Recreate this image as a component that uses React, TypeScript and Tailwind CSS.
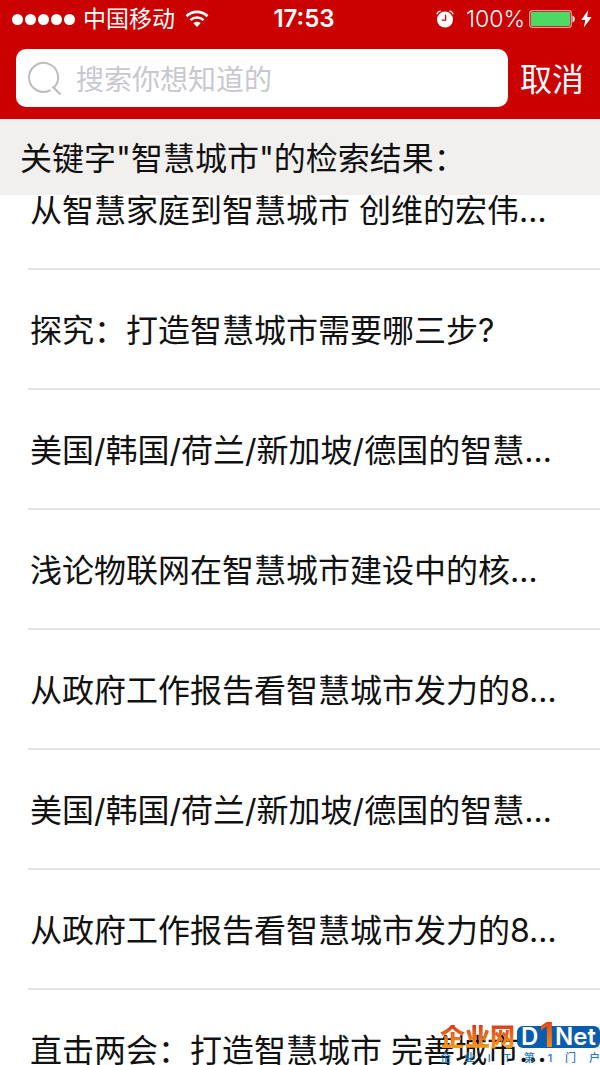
import { FormEvent, useState } from "react";

type Article = {
  id: number;
  title: string;
};

const articles: Article[] = [
  { id: 1, title: "从智慧家庭到智慧城市 创维的宏伟…" },
  { id: 2, title: "探究：打造智慧城市需要哪三步?" },
  { id: 3, title: "美国/韩国/荷兰/新加坡/德国的智慧…" },
  { id: 4, title: "浅论物联网在智慧城市建设中的核…" },
  { id: 5, title: "从政府工作报告看智慧城市发力的8…" },
  { id: 6, title: "美国/韩国/荷兰/新加坡/德国的智慧…" },
  { id: 7, title: "从政府工作报告看智慧城市发力的8…" },
  { id: 8, title: "直击两会：打造智慧城市 完善城市…" },
];

const tagline = ["企", "业", "I", "T", "第", "1", "门", "户"];

function WifiIcon() {
  return (
    <svg viewBox="0 0 24 18" className="w-6 h-[18px]" fill="none" aria-hidden="true">
      <path d="M1.5 6.2a15 15 0 0 1 21 0" stroke="white" strokeWidth="2.6" />
      <path d="M5.4 10.2a9.4 9.4 0 0 1 13.2 0" stroke="white" strokeWidth="2.5" />
      <path d="M8.4 13.2a5.1 5.1 0 0 1 7.2 0L12 17Z" fill="white" />
    </svg>
  );
}

function AlarmIcon() {
  return (
    <svg viewBox="0 0 18 18" className="w-[18px] h-[18px]" fill="none" aria-hidden="true">
      <circle cx="9" cy="9.6" r="8" fill="white" />
      <path d="M.8 4.2Q1.8 1.6 4.6.9M17.2 4.2Q16.2 1.6 13.4.9" stroke="white" strokeWidth="1.4" />
      <path d="M9.6 4.8v5.4H5.8" stroke="#cb0000" strokeWidth="1.3" />
    </svg>
  );
}

function BatteryIcon() {
  return (
    <svg viewBox="0 0 46 18" className="w-[46px] h-[18px]" fill="none" aria-hidden="true">
      <rect x=".7" y=".7" width="41.6" height="16.6" rx="2.6" stroke="#f2a3a3" strokeWidth="1.2" />
      <rect x="2" y="2" width="39" height="14" rx="1" fill="#4cd964" />
      <path d="M43.5 5.500c3 .8 3 6.200 0 7Z" fill="white" />
    </svg>
  );
}

function BoltIcon() {
  return (
    <svg viewBox="0 0 11 18" className="w-[11px] h-[18px]" aria-hidden="true">
      <path d="M7.200 0 .3 10h4L2.800 17.500 10.700 7H6.200Z" fill="white" />
    </svg>
  );
}

function SearchIcon() {
  return (
    <svg viewBox="0 0 34 34" className="w-[34px] h-[34px] shrink-0" fill="none" aria-hidden="true">
      <path d="M22.500 29.200A14.500 14.500 0 1 1 26.500 26" stroke="#bdbdb9" strokeWidth="2" />
      <path d="M24.500 25.500l8 8" stroke="#bdbdb9" strokeWidth="2.200" />
    </svg>
  );
}

function StatusBar() {
  return (
    <div className="grid grid-cols-[1fr_auto_1fr] items-center h-[38px] pl-3 pr-2 text-white">
      <div className="flex items-center">
        <div className="flex gap-[2px]">
          {[0, 1, 2, 3, 4].map((dot) => (
            <span key={dot} className="w-[11px] h-[11px] rounded-full bg-white" />
          ))}
        </div>
        <span className="ml-2 mr-[10px] text-[23px] leading-none">中国移动</span>
        <WifiIcon />
      </div>
      <span className="pl-1 text-[24px] leading-none font-semibold">17:53</span>
      <div className="flex items-center justify-end">
        <AlarmIcon />
        <span className="ml-3 mr-1 text-[23px] leading-none font-light">100%</span>
        <BatteryIcon />
        <span className="ml-[6px]">
          <BoltIcon />
        </span>
      </div>
    </div>
  );
}

function Watermark() {
  return (
    <div className="absolute right-0 bottom-0 w-40 h-11 z-20">
      <div className="flex items-center justify-between h-8">
        <span className="text-[25px] leading-none font-black bg-gradient-to-b from-[#d93a1c] to-[#f7a11b] bg-clip-text text-transparent">
          企业网
        </span>
        <span className="flex items-center justify-between h-[22px] w-[83px] px-1 rounded-md bg-[#0a5cad] text-white text-[24px] leading-none font-semibold">
          D
          <span className="pb-1 text-[34px] leading-none font-bold bg-gradient-to-b from-[#d93a1c] to-[#f7a11b] bg-clip-text text-transparent">
            1
          </span>
          Net
        </span>
      </div>
      <div className="flex justify-between text-[11px] leading-none font-medium text-[#1f78c1]">
        {tagline.map((char, index) => (
          <span key={index}>{char}</span>
        ))}
      </div>
    </div>
  );
}

export default function App() {
  const [keyword, setKeyword] = useState("");

  const onSubmit = (e: FormEvent) => {
    e.preventDefault();
  };

  return (
    <div className="relative flex flex-col h-screen overflow-hidden bg-white text-[#111] font-['Inter','Noto_Sans_CJK_SC',sans-serif]">
      <header className="bg-[#cb0000] shrink-0">
        <StatusBar />
        <form onSubmit={onSubmit} className="flex items-center pt-[11px] pb-3 px-4">
          <label className="flex flex-1 min-w-0 items-center h-[58px] pl-3 gap-[14px] rounded-[10px] bg-white">
            <SearchIcon />
            <input
              type="text"
              aria-label="搜索"
              value={keyword}
              onChange={(e) => setKeyword(e.target.value)}
              placeholder="搜索你想知道的"
              className="flex-1 min-w-0 pt-1 text-[28px] outline-none placeholder:text-[#c8c8ce]"
            />
          </label>
          <button type="button" className="ml-3 pt-1 text-[32px] leading-none text-white">
            取消
          </button>
        </form>
      </header>

      <h1 className="relative z-10 flex items-center shrink-0 h-19 px-5 pt-1 bg-[#f1f0ee] text-[32px] leading-none font-normal">
        关键字"智慧城市"的检索结果：
      </h1>

      <ul className="flex-1 min-h-0 -mt-[45px] pl-7">
        {articles.map((article) => (
          <li key={article.id} className="h-30 border-b-2 border-[#e3e3e3]">
            <a href="#" className="flex items-center h-full pl-[2px] pt-1 text-[32px] leading-none whitespace-nowrap">
              {article.title}
            </a>
          </li>
        ))}
      </ul>

      <Watermark />
    </div>
  );
}
